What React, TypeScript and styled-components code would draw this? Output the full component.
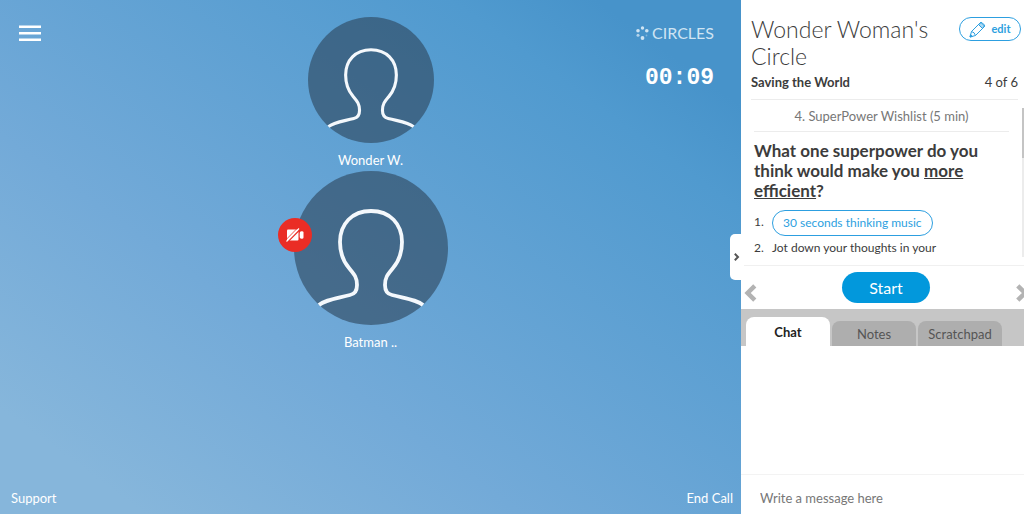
import React from "react";
import styled, { createGlobalStyle, css } from "styled-components";

const GlobalStyle = createGlobalStyle`
  * { box-sizing: border-box; }
  html, body { margin: 0; padding: 0; }
  body {
    font-family: Lato, "Liberation Sans", sans-serif;
    font-size: 13px;
    line-height: 20px;
    color: #3c3c3c;
  }
  button, input { font: inherit; }
  button { border: 0; padding: 0; background: none; cursor: pointer; }
  h1, h2, p, ol { margin: 0; padding: 0; }
`;

const Page = styled.div`
  display: grid;
  grid-template-columns: minmax(0, 1fr) minmax(283px, 27%);
  min-height: 100vh;
`;

const Stage = styled.main`
  display: grid;
  grid-template-columns: 1fr auto 1fr;
  grid-template-rows: 1fr auto;
  background: linear-gradient(216deg, #4793ca 10%, #509acf 20%, #73aad8 64%, #86b6db 90%);
  color: #fff;
`;

const MenuButton = styled.button`
  justify-self: start;
  align-self: start;
  margin: 24px 0 0 18px;
  height: 20px;
  color: #fff;
  svg { display: block; }
`;

const People = styled.div`
  display: flex;
  flex-direction: column;
  align-items: center;
  padding-top: 17px;
`;

const Person = styled.figure`
  margin: 0;
  display: flex;
  flex-direction: column;
  align-items: center;
`;

const Disc = styled.div<{ $size: number }>`
  position: relative;
  width: ${(p) => p.$size}px;
  height: ${(p) => p.$size}px;
  > svg { display: block; width: 100%; height: 100%; }
`;

const Name = styled.figcaption`
  padding: 7px 0 1px;
`;

const CameraOff = styled.span`
  position: absolute;
  left: -16px;
  top: 47px;
  width: 34px;
  height: 34px;
  border-radius: 50%;
  background: #ea2d25;
  display: flex;
  align-items: center;
  justify-content: center;
`;

const Status = styled.div`
  justify-self: end;
  display: flex;
  flex-direction: column;
  align-items: flex-end;
  padding: 23px 27px 0 0;
`;

const Brand = styled.div`
  display: flex;
  align-items: center;
  gap: 3px;
  font-size: 16px;
  color: #cfe4f3;
`;

const Timer = styled.time`
  margin-top: 23px;
  font: 700 23px/24px "Liberation Mono", monospace;
`;

const StageFooter = styled.footer`
  grid-column: 1 / -1;
  display: flex;
  justify-content: space-between;
  padding: 0 8px 6px 11px;
`;

const StageLink = styled.a`
  color: #fff;
  text-decoration: none;
`;

const Side = styled.aside`
  position: relative;
  display: flex;
  flex-direction: column;
  background: #fff;
`;

const Collapse = styled.button`
  position: absolute;
  left: -11px;
  top: 234px;
  width: 14px;
  height: 46px;
  border-radius: 5px 0 0 5px;
  background: #fff;
  color: #555;
  svg { display: block; margin-left: 4px; }
`;

const Header = styled.header`
  margin: 0 6px 0 10px;
  padding-top: 16px;
  border-bottom: 1px solid #ececec;
`;

const TitleRow = styled.div`
  display: flex;
  align-items: flex-start;
  justify-content: space-between;
  margin-right: -3px;
`;

const Title = styled.h1`
  font-size: 23px;
  line-height: 27px;
  font-weight: 300;
  flex: 1;
`;

const outline = css`
  border: 1px solid #2d9fe0;
  border-radius: 14px;
  background: #fff;
  color: #2d9fe0;
`;

const EditButton = styled.button`
  ${outline}
  display: flex;
  align-items: center;
  justify-content: center;
  gap: 5px;
  width: 62px;
  height: 24px;
  margin-top: 1px;
  font-size: 11px;
  font-weight: 700;
`;

const Meta = styled.div`
  display: flex;
  justify-content: space-between;
  padding: 2px 0 7px;
`;

const Agenda = styled.section`
  display: flex;
  justify-content: space-between;
  height: 166px;
  border-bottom: 1px solid #f0f0f0;
`;

const AgendaBody = styled.div`
  flex: 1;
  padding-left: 13px;
`;

const Step = styled.p`
  padding: 6px 0 5px;
  border-bottom: 1px solid #ececec;
  text-align: center;
  color: #777;
`;

const Question = styled.h2`
  padding-top: 9px;
  font-size: 17px;
  line-height: 20px;
  font-weight: 700;
`;

const Tasks = styled.ol`
  list-style: none;
  padding-top: 9px;
  font-size: 12px;
`;

const Task = styled.li`
  display: grid;
  grid-template-columns: 18px 1fr;
  justify-items: start;
  line-height: 24px;
`;

const MusicButton = styled.button`
  ${outline}
  height: 26px;
  padding: 0 10px;
`;

const ScrollTrack = styled.div`
  width: 2px;
  margin: 8px 0 8px 13px;
  background: #ececec;
  &::before {
    content: "";
    display: block;
    height: 50px;
    background: #c4c4c4;
  }
`;

const Controls = styled.div`
  display: grid;
  grid-template-columns: 12px 1fr 8px;
  align-items: center;
  justify-items: center;
  overflow: hidden;
  height: 43px;
  padding-left: 3px;
`;

const Arrow = styled.button`
  justify-self: start;
  height: 18px;
  margin-top: 10px;
  color: #b3b3b3;
  svg { display: block; }
`;

const StartButton = styled.button`
  width: 88px;
  height: 31px;
  border-radius: 16px;
  background: #0298dc;
  color: #fff;
  font-size: 16px;
`;

const Tabs = styled.div`
  display: flex;
  align-items: flex-end;
  gap: 2px;
  height: 37px;
  padding-left: 5px;
  background: #c6c6c6;
`;

const Tab = styled.button<{ $active?: boolean }>`
  width: 84px;
  height: ${(p) => (p.$active ? 29 : 25)}px;
  border-radius: 8px 8px 0 0;
  background: ${(p) => (p.$active ? "#fff" : "#aeaeae")};
  color: ${(p) => (p.$active ? "#222" : "#555")};
  font-weight: ${(p) => (p.$active ? 700 : 400)};
`;

const Messages = styled.div`
  flex: 1;
  min-height: 80px;
`;

const MessageInput = styled.input`
  height: 40px;
  padding: 6px 18px 0 19px;
  border: 0;
  border-top: 1px solid #f3f3f3;
  outline: 0;
  background: #fff;
  &::placeholder { color: #777; opacity: 1; }
`;

function Avatar() {
  return (
    <svg viewBox="0 0 154 154" aria-hidden="true">
      <circle cx="77" cy="77" r="77" fill="#2b4358" fillOpacity="0.6" />
      <path
        d="M25 134 C31 129 40 128 56 124 C61 123 63 119 63 114 C63 106 60 103 55 97 C49 90 46 83 46 71 C46 53 58 40 77 40 C96 40 108 53 108 71 C108 83 105 90 99 97 C94 103 91 106 91 114 C91 119 93 123 98 124 C114 128 123 129 129 134"
        fill="none"
        stroke="#f4f8fc"
        strokeWidth="3.8"
      />
    </svg>
  );
}

function Chevron({ back, size, weight }: { back?: boolean; size: number; weight: number }) {
  return (
    <svg width={size * 0.7} height={size} viewBox="0 0 14 20" fill="none" stroke="currentColor" strokeWidth={weight} aria-hidden="true">
      <path d={back ? "M12 2 L4 10 L12 18" : "M2 2 L10 10 L2 18"} />
    </svg>
  );
}

export default function App() {
  return (
    <>
      <GlobalStyle />
      <Page>
        <Stage>
          <MenuButton aria-label="Menu">
            <svg width="24" height="20" viewBox="0 0 24 20" fill="#fff" aria-hidden="true">
              <path d="M1 1.500h22v2.500H1zM1 8h22v2.500H1zM1 14.500h22v2.500H1z" />
            </svg>
          </MenuButton>
          <People>
            <Person>
              <Disc $size={126}><Avatar /></Disc>
              <Name>Wonder W.</Name>
            </Person>
            <Person>
              <Disc $size={154}>
                <Avatar />
                <CameraOff>
                  <svg width="20" height="16" viewBox="0 0 20 16" role="img" aria-label="Camera off">
                    <path d="M2 3.5Q2 2.5 3 2.5H12.5Q13.5 2.5 13.5 3.5V12.5Q13.5 13.5 12.5 13.5H3Q2 13.5 2 12.5Z" fill="#fff" />
                    <path d="M14.700 6Q14.700 4.500 16.500 4.200Q18.500 4 18.500 5.500V10.500Q18.500 12 16.500 11.800Q14.700 11.500 14.700 10Z" fill="#fff" />
                    <path d="M2.500 15L15 2.500" stroke="#ea2d25" strokeWidth="1.500" />
                    <path d="M1.500 14.500L14 1.500" stroke="#fff" strokeWidth="1.200" />
                    <path d="M1 12.700L12 1.500" stroke="#ea2d25" strokeWidth="0.800" />
                  </svg>
                </CameraOff>
              </Disc>
              <Name>Batman ..</Name>
            </Person>
          </People>
          <Status>
            <Brand>
              <svg width="14" height="14" viewBox="0 0 14 14" fill="currentColor" aria-hidden="true">
                <circle cx="7.500" cy="2" r="1.700" />
                <circle cx="11.800" cy="4.700" r="1.800" />
                <circle cx="11.500" cy="9.500" r="0.900" fillOpacity="0.400" />
                <circle cx="7.500" cy="12" r="1.900" />
                <circle cx="3" cy="9.200" r="1.500" fillOpacity="0.800" />
                <circle cx="3" cy="4.700" r="1.800" />
              </svg>
              CIRCLES
            </Brand>
            <Timer>00:09</Timer>
          </Status>
          <StageFooter>
            <StageLink href="#support">Support</StageLink>
            <StageLink href="#end">End Call</StageLink>
          </StageFooter>
        </Stage>
        <Side>
          <Collapse aria-label="Collapse panel"><Chevron size={8} weight={5} /></Collapse>
          <Header>
            <TitleRow>
              <Title>Wonder Woman's Circle</Title>
              <EditButton>
                <svg width="17" height="17" viewBox="0 0 17 17" fill="none" stroke="currentColor" strokeWidth="1" strokeLinejoin="round" aria-hidden="true">
                  <path d="M1 16L2.500 10.500L11 2Q12 1 13.200 1.800L15.200 3.800Q16 5 15 6L6.500 14.500Z" />
                  <path d="M2.500 10.500Q5.500 11 6.500 14.500M9.500 3.500L13.500 7.500" />
                  <path d="M9.500 3.500L12 1.500L15.500 5L13.500 7.500Z" fill="currentColor" fillOpacity="0.400" />
                  <path d="M1 16L1.600 13.700L3.300 15.400Z" fill="currentColor" />
                </svg>
                edit
              </EditButton>
            </TitleRow>
            <Meta>
              <strong>Saving the World</strong>
              <span>4 of 6</span>
            </Meta>
          </Header>
          <Agenda>
            <AgendaBody>
              <Step>4. SuperPower Wishlist (5 min)</Step>
              <Question>
                What one superpower do you think would make you <u>more efficient</u>?
              </Question>
              <Tasks>
                <Task><span>1.</span><MusicButton>30 seconds thinking music</MusicButton></Task>
                <Task><span>2.</span><span>Jot down your thoughts in your</span></Task>
              </Tasks>
            </AgendaBody>
            <ScrollTrack />
          </Agenda>
          <Controls>
            <Arrow aria-label="Previous"><Chevron back size={18} weight={5} /></Arrow>
            <StartButton>Start</StartButton>
            <Arrow aria-label="Next"><Chevron size={18} weight={5} /></Arrow>
          </Controls>
          <Tabs role="tablist">
            <Tab role="tab" aria-selected="true" $active>Chat</Tab>
            <Tab role="tab" aria-selected="false">Notes</Tab>
            <Tab role="tab" aria-selected="false">Scratchpad</Tab>
          </Tabs>
          <Messages />
          <MessageInput aria-label="Write a message here" placeholder="Write a message here" />
        </Side>
      </Page>
    </>
  );
}
